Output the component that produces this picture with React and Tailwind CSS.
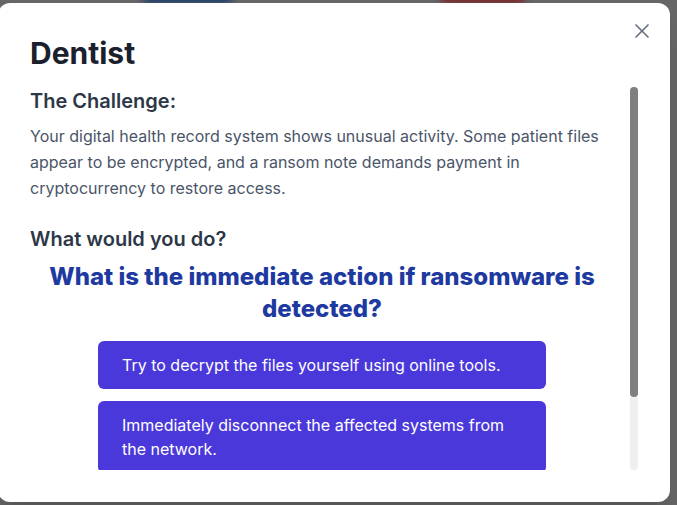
import { X } from "lucide-react";

const answers = [
  "Try to decrypt the files yourself using online tools.",
  "Immediately disconnect the affected systems from the network.",
  "Pay the ransom quickly so the clinic can reopen.",
  "Restart every computer and hope the problem goes away.",
];

export default function App() {
  return (
    <div
      className="relative h-[505px] w-[677px] overflow-hidden bg-[#666666]"
      style={{ fontFamily: "Inter, 'Noto Sans', sans-serif" }}
    >
      {/* page behind the overlay, only its top edge peeks out */}
      <div className="absolute left-[140px] top-[-20px] h-6 w-[95px] rounded-full bg-[#23426b] blur-[3px]" />
      <div className="absolute left-[438px] top-[-20px] h-6 w-[90px] rounded-full bg-[#7a2a2a] blur-[3px]" />

      <div className="relative flex h-full items-center">
        <div className="relative ml-[-2px] flex h-[499px] w-[672px] flex-col rounded-xl bg-white p-8 shadow-xl">
          <button className="absolute right-4 top-4 text-[#6b7280]">
            <X size={24} strokeWidth={1.75} />
          </button>

          <h2 className="text-[30px] font-bold leading-9 text-[#1a202c]">Dentist</h2>

          <div className="relative mt-4 min-h-0 flex-1">
            <div className="h-full overflow-y-auto pr-6 [scrollbar-width:none]">
              <h3 className="text-xl font-semibold leading-7 text-[#2d3748]">The Challenge:</h3>
              <p className="mt-2 text-base leading-[26px] text-[#4a5568]">
                Your digital health record system shows unusual activity. Some patient files
                appear to be encrypted, and a ransom note demands payment in cryptocurrency to
                restore access.
              </p>

              <h3 className="mt-6 text-xl font-semibold leading-7 text-[#2d3748]">
                What would you do?
              </h3>
              <p className="mt-2 text-center text-2xl font-extrabold leading-8 text-[#1e3aa0]">
                What is the immediate action if ransomware is detected?
              </p>

              <div className="mx-auto mt-4 flex max-w-md flex-col gap-3 pb-6">
                {answers.map((a) => (
                  <button
                    key={a}
                    className="rounded-md bg-[#4a38da] px-6 py-3 text-left text-base leading-6 text-white"
                  >
                    {a}
                  </button>
                ))}
              </div>
            </div>

            {/* scrollbar */}
            <div className="absolute right-0 top-0 h-full w-2 rounded-full bg-[#efefef]">
              <div className="h-[310px] w-2 rounded-full bg-[#7f7f7f]" />
            </div>
          </div>
        </div>
      </div>
    </div>
  );
}
